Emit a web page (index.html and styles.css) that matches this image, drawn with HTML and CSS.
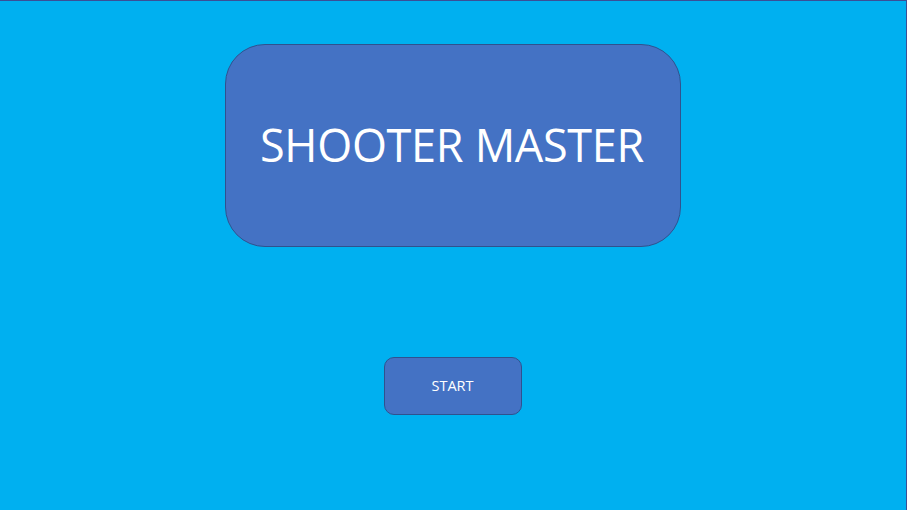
FILE: index.html
```html
<!DOCTYPE html>
<html>
<head>
<meta charset="utf-8">
<link rel="stylesheet" href="styles.css">
</head>
<body>
<div class="slide">
  <div class="title-box"><span class="title">SHOOTER MASTER</span></div>
  <div class="start-btn"><span class="start">START</span></div>
</div>
</body>
</html>
```

FILE: styles.css
```css
html, body {
  margin: 0;
  padding: 0;
}
body {
  font-family: "Open Sans", "Liberation Sans", sans-serif;
  background: #00b0f0;
}
.slide {
  box-sizing: border-box;
  width: 907px;
  height: 510px;
  background: #00b0f0;
  border-top: 1px solid #3a4f96;
  border-right: 1px solid #3a4f96;
  display: flex;
  flex-direction: column;
  align-items: center;
  padding-top: 43px;
}
.title-box {
  box-sizing: border-box;
  width: 456px;
  height: 203px;
  background: #4472c4;
  border: 1px solid #2f528f;
  border-radius: 40px;
  display: flex;
  align-items: center;
  justify-content: center;
}
.title {
  color: #ffffff;
  font-size: 45px;
  letter-spacing: -0.3px;
  line-height: 1;
  margin-top: -2px;
  margin-left: -2px;
}
.start-btn {
  box-sizing: border-box;
  width: 138px;
  height: 58px;
  margin-top: 110px;
  background: #4472c4;
  border: 1px solid #2f528f;
  border-radius: 10px;
  display: flex;
  align-items: center;
  justify-content: center;
}
.start {
  color: #ffffff;
  font-size: 14.5px;
  line-height: 1;
  font-weight: 500;
  margin-left: -1px;
}
```
